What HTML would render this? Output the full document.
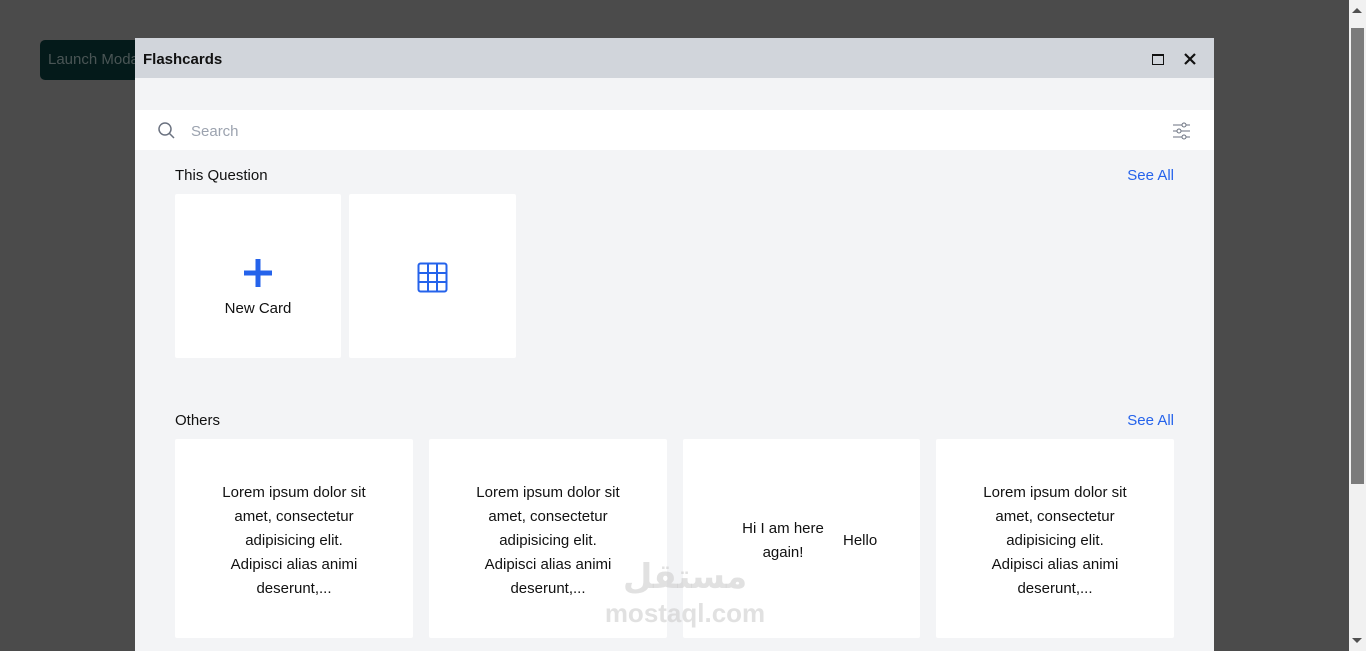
<!DOCTYPE html>
<html><head><style>
*{box-sizing:border-box;margin:0;padding:0}
body{width:1366px;height:651px;overflow:hidden;background:#4b4b4b;font-family:"Liberation Sans",sans-serif;position:relative}
.btn{position:absolute;left:40px;top:40px;width:120px;height:40px;background:#041a1a;border-radius:5px;color:#4a5555;font-size:15px;line-height:40px;padding-left:8px}
.sb{position:absolute;left:1349px;top:0;width:17px;height:651px;background:#f1f1f1}
.thumb{position:absolute;left:1351px;top:28px;width:13px;height:456px;background:#7b7b7b}
.modal{position:absolute;left:135px;top:38px;width:1079px;height:613px;background:#f3f4f6}
.hd{height:40px;background:#d1d5db;position:relative}
.hd .t{position:absolute;left:8px;top:13px;font-size:15px;font-weight:bold;color:#111}
.search{position:absolute;top:72px;left:0;width:1079px;height:40px;background:#fff}
.search span{position:absolute;left:56px;top:13px;color:#9ca3af;font-size:15px}
.lbl{position:absolute;font-size:15px;color:#111}
.see{position:absolute;font-size:15px;color:#2563eb;right:40px}
.card{position:absolute;background:#fff;border-radius:2px}
.txt{position:absolute;left:0;right:0;text-align:center;font-size:15px;line-height:24px;color:#111;white-space:nowrap}
.wm{position:absolute;left:600px;top:555px;color:rgba(200,200,200,.55);font-weight:bold;font-size:28px;text-align:center;width:170px}
</style></head><body>
<div class="btn">Launch Modal</div>
<div class="sb"></div><div class="thumb"></div>
<div style="position:absolute;left:1352px;top:8px;width:0;height:0;border-left:5px solid transparent;border-right:5px solid transparent;border-bottom:5px solid #505050"></div>
<div style="position:absolute;left:1352px;top:638px;width:0;height:0;border-left:5px solid transparent;border-right:5px solid transparent;border-top:5px solid #505050"></div>
<div class="modal">
 <div class="hd"><div class="t">Flashcards</div>
  <div style="position:absolute;left:1017px;top:16px;width:12px;height:11px;border:1.5px solid #111;border-top-width:2.5px"></div>
  <svg style="position:absolute;left:1049px;top:15px" width="12" height="12"><path d="M1 1L11 11M11 1L1 11" stroke="#111" stroke-width="2.2"/></svg>
 </div>
 <div class="search">
  <svg style="position:absolute;left:22px;top:11px" width="20" height="20"><circle cx="8" cy="8" r="6" stroke="#6b7280" stroke-width="1.5" fill="none"/><path d="M12.5 12.5L17 17" stroke="#6b7280" stroke-width="1.5"/></svg>
  <span>Search</span>
  <svg style="position:absolute;left:1037px;top:12px" width="20" height="18"><g stroke="#6b7280" stroke-width="1" fill="#fff"><path d="M1 3H18M1 9H18M1 15H18"/><circle cx="12" cy="3" r="2"/><circle cx="7" cy="9" r="2"/><circle cx="12" cy="15" r="2"/></g></svg>
 </div>
 <div class="lbl" style="left:40px;top:129px">This Question</div>
 <div class="see" style="top:129px">See All</div>
 <div class="card" style="left:40px;top:156px;width:166px;height:164px">
  <svg style="position:absolute;left:68px;top:64px" width="30" height="30"><path d="M15 1V29M1 15H29" stroke="#2563eb" stroke-width="5"/></svg>
  <div class="txt" style="top:103px">New Card</div>
 </div>
 <div class="card" style="left:214px;top:156px;width:167px;height:164px">
  <svg style="position:absolute;left:68px;top:68px" width="31" height="31"><g stroke="#2563eb" stroke-width="2" fill="none"><rect x="1.5" y="1.5" width="28" height="28" rx="2"/><path d="M11 1.5V29.5M20 1.5V29.5M1.5 11H29.5M1.5 20H29.5"/></g></svg>
 </div>
 <div class="lbl" style="left:40px;top:374px">Others</div>
 <div class="see" style="top:374px">See All</div>
 <div class="card" style="left:40px;top:401px;width:238px;height:199px"><div class="txt" style="top:42px">Lorem ipsum dolor sit<br>amet, consectetur<br>adipisicing elit.<br>Adipisci alias animi<br>deserunt,...</div></div>
 <div class="card" style="left:294px;top:401px;width:238px;height:199px"><div class="txt" style="top:42px">Lorem ipsum dolor sit<br>amet, consectetur<br>adipisicing elit.<br>Adipisci alias animi<br>deserunt,...</div></div>
 <div class="card" style="left:548px;top:401px;width:237px;height:199px">
  <div class="txt" style="top:78px;left:50px;right:auto;width:100px">Hi I am here<br>again!</div>
  <div class="txt" style="top:90px;left:160px;right:auto">Hello</div>
 </div>
 <div class="card" style="left:801px;top:401px;width:238px;height:199px"><div class="txt" style="top:42px">Lorem ipsum dolor sit<br>amet, consectetur<br>adipisicing elit.<br>Adipisci alias animi<br>deserunt,...</div></div>
</div>
<div class="wm"><div style="font-size:34px;line-height:44px;font-family:'DejaVu Sans',sans-serif">مستقل</div><div style="font-size:26px;line-height:28px">mostaql.com</div></div>
</body></html>
